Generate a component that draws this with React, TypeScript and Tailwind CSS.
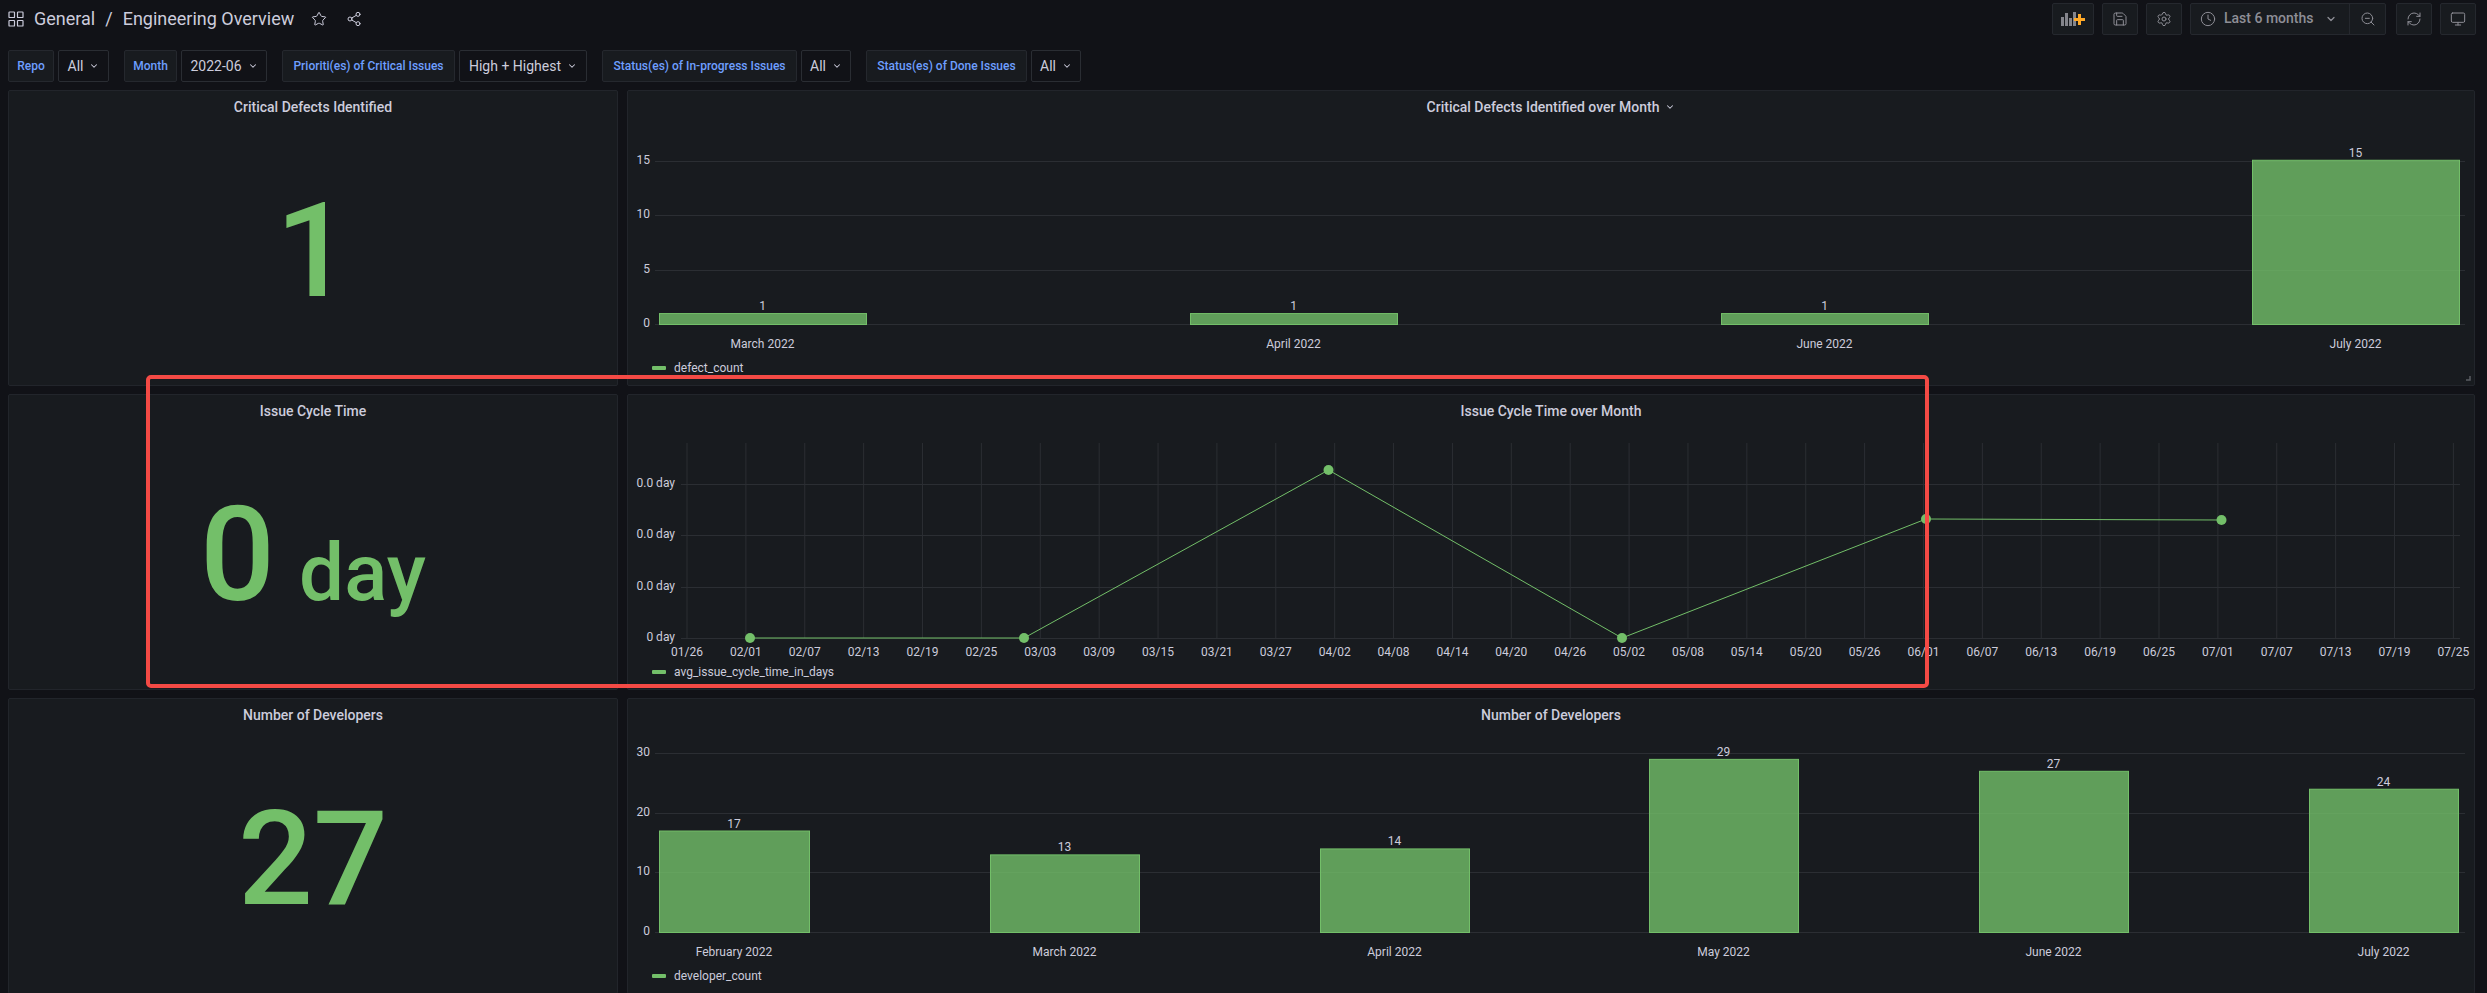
import { Star, Share2, Save, Settings, Clock, ChevronDown, ZoomOut, RefreshCw, Monitor } from "lucide-react";

const GREEN = "#73BF69";

function Btn({ children, w }: { children: React.ReactNode; w: string }) {
  return <div className={`${w} h-[32px] flex items-center justify-center rounded-[2px] border border-[#25282e] bg-[#181b1f] text-[#8e8e96]`}>{children}</div>;
}

function Filter({ label, value, lw, vw }: { label: string; value: string; lw: string; vw: string }) {
  return (
    <div className="flex gap-[4px]">
      <div className={`${lw} h-[32px] flex items-center justify-center rounded-[2px] border border-[#25282e] bg-[#181b1f] text-[12px] font-medium text-[#6e9fff]`}>{label}</div>
      <div className={`${vw} h-[32px] flex items-center justify-center gap-[6px] rounded-[2px] border border-[#2a2d33] bg-[#111217] text-[14px] text-[#ccccdc]`}>
        {value}
        <ChevronDown size={10} strokeWidth={2.5} />
      </div>
    </div>
  );
}

function Panel({ title, className, children }: { title: React.ReactNode; className?: string; children: React.ReactNode }) {
  return (
    <div className={`relative flex flex-col overflow-hidden rounded-[2px] border border-[#22252b] bg-[#181b1f] ${className ?? ""}`}>
      <div className="h-[32px] shrink-0 flex items-center justify-center text-[14px] font-medium text-[#ccccdc]">{title}</div>
      {children}
    </div>
  );
}

function Stat({ children }: { children: React.ReactNode }) {
  return <div className="flex-1 flex items-center justify-center font-medium text-[#73bf69] leading-none">{children}</div>;
}

type Bar = { x: number; w: number; v: number; label: string };

function BarChart({ top, grid, ticks, base, unit, bars, legend, xLabelY, legendY, resize }: {
  top: number; grid: number[]; ticks: string[]; base: number; unit: number; bars: Bar[]; legend: string; xLabelY: number; legendY: number; resize?: boolean;
}) {
  return (
    <svg width={1846} height={262} viewBox={`628 ${top} 1846 262`} className="block shrink-0" fontFamily="Roboto, sans-serif" fontSize={12}>
      {grid.map((y, i) => (
        <g key={y}>
          <line x1={655} x2={2465} y1={y + 0.5} y2={y + 0.5} stroke="#2b2e33" />
          <text x={650} y={y + 3} textAnchor="end" fill="#ccccdc">{ticks[i]}</text>
        </g>
      ))}
      {bars.map((b) => {
        const t = base - b.v * unit;
        return (
          <g key={b.label}>
            <rect x={b.x + 0.5} y={t + 0.5} width={b.w} height={base - t} fill={GREEN} fillOpacity={0.8} stroke={GREEN} />
            <text x={b.x + b.w / 2} y={t - 3} textAnchor="middle" fill="#ccccdc">{b.v}</text>
            <text x={b.x + b.w / 2} y={xLabelY} textAnchor="middle" fill="#ccccdc">{b.label}</text>
          </g>
        );
      })}
      <rect x={652} y={legendY - 2} width={14} height={4} rx={1} fill={GREEN} />
      <text x={674} y={legendY + 4} fill="#ccccdc">{legend}</text>
      {resize && <path d="M2470 376v4h-4" fill="none" stroke="#5a5d63" strokeWidth={1.5} />}
    </svg>
  );
}

const xTicks = ["01/26","02/01","02/07","02/13","02/19","02/25","03/03","03/09","03/15","03/21","03/27","04/02","04/08","04/14","04/20","04/26","05/02","05/08","05/14","05/20","05/26","06/01","06/07","06/13","06/19","06/25","07/01","07/07","07/13","07/19","07/25"];
const pts: [number, number][] = [[750,638],[1024,638],[1328.5,470],[1622,638],[1926,519],[2221.5,520]];

function LineChart() {
  return (
    <svg width={1846} height={262} viewBox="628 427 1846 262" className="block shrink-0" fontFamily="Roboto, sans-serif" fontSize={12}>
      {xTicks.map((t, i) => {
        const x = 687 + i * 58.88;
        return (
          <g key={t}>
            <line x1={x} x2={x} y1={443} y2={638} stroke="#2b2e33" />
            <text x={x} y={656} textAnchor="middle" fill="#ccccdc">{t}</text>
          </g>
        );
      })}
      {[484,535,587,638].map((y, i) => (
        <g key={y}>
          <line x1={681} x2={2460} y1={y + 0.5} y2={y + 0.5} stroke="#2b2e33" />
          <text x={675} y={y + 3} textAnchor="end" fill="#ccccdc">{i === 3 ? "0 day" : "0.0 day"}</text>
        </g>
      ))}
      <polyline points={pts.map((p) => p.join(",")).join(" ")} fill="none" stroke={GREEN} strokeWidth={1} />
      {pts.map((p) => <circle key={p[0]} cx={p[0]} cy={p[1]} r={5} fill={GREEN} />)}
      <rect x={652} y={670} width={14} height={4} rx={1} fill={GREEN} />
      <text x={674} y={676} fill="#ccccdc">avg_issue_cycle_time_in_days</text>
    </svg>
  );
}

export default function App() {
  return (
    <div className="relative h-screen w-full overflow-hidden bg-[#111217] font-['Roboto',sans-serif] text-[#ccccdc]">
      {/* Top bar */}
      <div className="h-[36px] flex items-center pl-[8px] pr-[11px] pt-[1px]">
        <svg width={16} height={16} viewBox="0 0 16 16" fill="none" stroke="#ccccdc" strokeWidth={1.2}>
          <rect x={1} y={1} width={5.5} height={5.5} rx={0.6} /><rect x={9.5} y={1} width={5.5} height={5.5} rx={0.6} />
          <rect x={1} y={9.5} width={5.5} height={5.5} rx={0.6} /><rect x={9.5} y={9.5} width={5.5} height={5.5} rx={0.6} />
        </svg>
        <div className="ml-[10px] flex gap-[10px] text-[18px] text-[#ccccdc]">
          <span>General</span><span>/</span><span>Engineering Overview</span>
        </div>
        <Star size={16} className="ml-[17px] text-[#ccccdc]" strokeWidth={1.5} />
        <Share2 size={16} className="ml-[19px] text-[#ccccdc]" strokeWidth={1.5} />
        <div className="ml-auto flex gap-[8px]">
          <Btn w="w-[42px]">
            <svg width={26} height={16} viewBox="0 0 26 16">
              <g fill="#84858c"><rect x={1} y={6} width={3} height={9} /><rect x={5} y={2} width={3} height={13} /><rect x={9} y={7} width={3} height={8} /><rect x={13} y={1} width={3} height={14} /></g>
              <path d="M18 3v4h-4v3h4v4h3v-4h4V7h-4V3z" fill="#ffa928" />
            </svg>
          </Btn>
          <Btn w="w-[36px]"><Save size={16} strokeWidth={1.5} /></Btn>
          <Btn w="w-[36px]"><Settings size={16} strokeWidth={1.5} /></Btn>
          <div className="h-[32px] w-[196px] flex rounded-[2px] border border-[#25282e] bg-[#181b1f] text-[#8e8e96]">
            <div className="w-[159px] flex items-center pl-[9px] text-[14px] font-medium border-r border-[#25282e]">
              <Clock size={16} strokeWidth={1.5} />
              <span className="ml-[8px]">Last 6 months</span>
              <ChevronDown size={12} strokeWidth={2.5} className="ml-[12px]" />
            </div>
            <div className="flex-1 flex items-center justify-center"><ZoomOut size={16} strokeWidth={1.5} /></div>
          </div>
          <div className="ml-[2px]"><Btn w="w-[36px]"><RefreshCw size={16} strokeWidth={1.5} /></Btn></div>
          <Btn w="w-[36px]"><Monitor size={16} strokeWidth={1.5} /></Btn>
        </div>
      </div>

      {/* Filters */}
      <div className="mt-[14px] h-[32px] flex gap-[15px] pl-[8px]">
        <Filter label="Repo" value="All" lw="w-[46px]" vw="w-[51px]" />
        <Filter label="Month" value="2022-06" lw="w-[53px]" vw="w-[86px]" />
        <Filter label="Prioriti(es) of Critical Issues" value="High + Highest" lw="w-[173px]" vw="w-[128px]" />
        <Filter label="Status(es) of In-progress Issues" value="All" lw="w-[195px]" vw="w-[50px]" />
        <Filter label="Status(es) of Done Issues" value="All" lw="w-[161px]" vw="w-[50px]" />
      </div>

      {/* Panels */}
      <div className="mt-[8px] ml-[8px] grid grid-cols-[610px_1848px] grid-rows-[296px_296px_296px] gap-x-[9px] gap-y-[8px]">
        <Panel title="Critical Defects Identified">
          <Stat><span className="text-[132px] -mt-[6px]">1</span></Stat>
        </Panel>
        <Panel title={<span className="flex items-center gap-[6px]">Critical Defects Identified over Month <ChevronDown size={10} strokeWidth={2.5} /></span>}>
          <BarChart top={123} grid={[161,215,270,324]} ticks={["15","10","5","0"]} base={324} unit={10.95} legend="defect_count" xLabelY={348} legendY={368} resize
            bars={[
              { x: 659, w: 207, v: 1, label: "March 2022" },
              { x: 1190, w: 207, v: 1, label: "April 2022" },
              { x: 1721, w: 207, v: 1, label: "June 2022" },
              { x: 2252, w: 207, v: 15, label: "July 2022" },
            ]} />
        </Panel>
        <Panel title="Issue Cycle Time">
          <Stat>
            <span className="flex items-baseline text-[132px] -mt-[6px]">0<span className="ml-[24px] text-[80px]">day</span></span>
          </Stat>
        </Panel>
        <Panel title="Issue Cycle Time over Month"><LineChart /></Panel>
        <Panel title="Number of Developers">
          <Stat><span className="text-[132px] -mt-[6px]">27</span></Stat>
        </Panel>
        <Panel title="Number of Developers">
          <BarChart top={731} grid={[753,813,872,932]} ticks={["30","20","10","0"]} base={932} unit={5.97} legend="developer_count" xLabelY={956} legendY={976}
            bars={[
              { x: 659, w: 150, v: 17, label: "February 2022" },
              { x: 990, w: 149, v: 13, label: "March 2022" },
              { x: 1320, w: 149, v: 14, label: "April 2022" },
              { x: 1649, w: 149, v: 29, label: "May 2022" },
              { x: 1979, w: 149, v: 27, label: "June 2022" },
              { x: 2309, w: 149, v: 24, label: "July 2022" },
            ]} />
        </Panel>
      </div>

      {/* Red annotation box drawn over the dashboard */}
      <div className="absolute left-[146px] top-[375px] h-[313px] w-[1783px] rounded-[5px] border-[4px] border-[#f44a45]" />
    </div>
  );
}
